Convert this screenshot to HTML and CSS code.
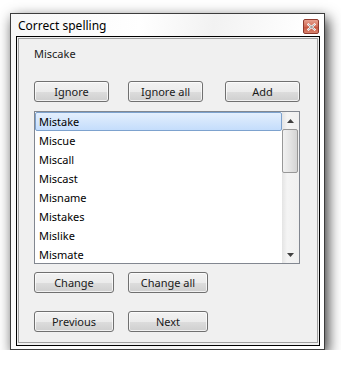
FILE: index.html
```html
<!DOCTYPE html>
<html lang="en">
<head>
  <meta charset="UTF-8">
  <title>Correct spelling</title>
  <link rel="stylesheet" href="styles.css">
</head>
<body>

  <div class="window">
    <div class="titlebar">
      <span class="title">Correct spelling</span>
      <span class="close-btn">
        <svg width="9" height="8" viewBox="0 0 9 8">
          <path d="M1.5 1.5 L7.5 6.5 M7.5 1.5 L1.5 6.5" stroke="#ffffff" stroke-width="2.2" stroke-linecap="square"/>
          <path d="M1.5 1.5 L7.5 6.5 M7.5 1.5 L1.5 6.5" stroke="#4a4a4a" stroke-width="0.6"/>
        </svg>
      </span>
    </div>

    <div class="client">
      <div class="panel">
        <div class="word">Miscake</div>

        <div class="row row-top">
          <button class="btn">Ignore</button>
          <button class="btn">Ignore all</button>
          <button class="btn btn-add">Add</button>
        </div>

        <div class="listbox">
          <div class="items">
            <div class="item selected">Mistake</div>
            <div class="item">Miscue</div>
            <div class="item">Miscall</div>
            <div class="item">Miscast</div>
            <div class="item">Misname</div>
            <div class="item">Mistakes</div>
            <div class="item">Mislike</div>
            <div class="item">Mismate</div>
          </div>
          <div class="scrollbar">
            <div class="arrow"><svg width="7" height="4" viewBox="0 0 7 4"><path d="M0 4 L3.5 0 L7 4 Z" fill="#404040"/></svg></div>
            <div class="thumb"></div>
            <div class="track"></div>
            <div class="arrow"><svg width="7" height="4" viewBox="0 0 7 4"><path d="M0 0 L3.5 4 L7 0 Z" fill="#404040"/></svg></div>
          </div>
        </div>

        <div class="row row-change">
          <button class="btn wide">Change</button>
          <button class="btn wide">Change all</button>
        </div>

        <div class="row row-nav">
          <button class="btn wide">Previous</button>
          <button class="btn wide">Next</button>
        </div>
      </div>
    </div>
  </div>

</body>
</html>
```

FILE: styles.css
```css
body {
  margin: 0;
  background: #fff;
  font-family: "Noto Sans", "Open Sans", sans-serif;
  font-size: 11px;
  color: #1a1a1a;
}

.window {
  margin: 13px 0 0 10px;
  width: 315px;
  height: 337px;
  box-sizing: border-box;
  border: 1px solid #3c3c3c;
  background: linear-gradient(100deg, #f7f7f7 0%, #ffffff 35%, #f2f2f2 55%, #ffffff 80%);
  box-shadow: 3px 5px 13px rgba(0,0,0,0.8);
}

.titlebar {
  height: 22px;
  display: flex;
  justify-content: space-between;
  align-items: flex-start;
  padding: 0 5px 0 7px;
}

.title {
  line-height: 22px;
  font-size: 12px;
  color: #000;
  padding-top: 1px;
}

.close-btn {
  margin-top: 5px;
  width: 16px;
  height: 15px;
  box-sizing: border-box;
  border: 1px solid #8f3a2e;
  border-radius: 2px;
  background: linear-gradient(#e8a08f, #d06a55 50%, #c4503a 51%, #d9826c);
  display: flex;
  align-items: center;
  justify-content: center;
}

.client {
  margin: 0 4px 0 5px;
  height: 310px;
  box-sizing: border-box;
  border: 1px solid #000;
  background: #f0f0f0;
  padding: 1px 1px 2px 1px;
}

.panel {
  height: 100%;
  box-sizing: border-box;
  border: 1px solid #a0a0a0;
  padding: 7px 16px 0 15px;
}

.word {
  line-height: 15px;
  height: 15px;
}

.row {
  display: flex;
}

.row-top {
  margin-top: 20px;
  gap: 19px;
}

.btn-add {
  margin-left: 3px;
}

.row-change {
  margin-top: 8px;
  gap: 14px;
}

.row-nav {
  margin-top: 18px;
  gap: 14px;
}

.btn {
  width: 75px;
  height: 21px;
  padding: 0;
  font-family: inherit;
  font-size: 11px;
  color: #1a1a1a;
  border: 1px solid #707070;
  border-radius: 3px;
  background: linear-gradient(#f2f2f2 0%, #ebebeb 50%, #dddddd 51%, #cfcfcf 100%);
  box-shadow: inset 0 0 0 1px rgba(255,255,255,0.7);
}

.btn.wide {
  width: 80px;
}

.listbox {
  margin-top: 9px;
  width: 266px;
  height: 153px;
  box-sizing: border-box;
  border: 1px solid #828790;
  background: #fff;
  display: flex;
  overflow: hidden;
}

.items {
  flex: 1;
}

.item {
  height: 19px;
  line-height: 19px;
  padding-left: 4px;
  color: #000;
}

.item.selected {
  padding-left: 3px;
  border: 1px solid #7da2ce;
  border-radius: 2px;
  line-height: 17px;
  height: 17px;
  background: linear-gradient(#e4effd, #c4ddfc);
}

.scrollbar {
  width: 17px;
  display: flex;
  flex-direction: column;
  background: linear-gradient(90deg, #e4e4e4, #f4f4f4 30%, #f0f0f0);
}

.arrow {
  height: 17px;
  display: flex;
  align-items: center;
  justify-content: center;
}

.thumb {
  height: 44px;
  margin-right: 1px;
  box-sizing: border-box;
  border: 1px solid #979797;
  border-radius: 2px;
  background: linear-gradient(90deg, #f1f1f1, #e4e4e4 50%, #d4d4d4);
}

.track {
  flex: 1;
}
```
